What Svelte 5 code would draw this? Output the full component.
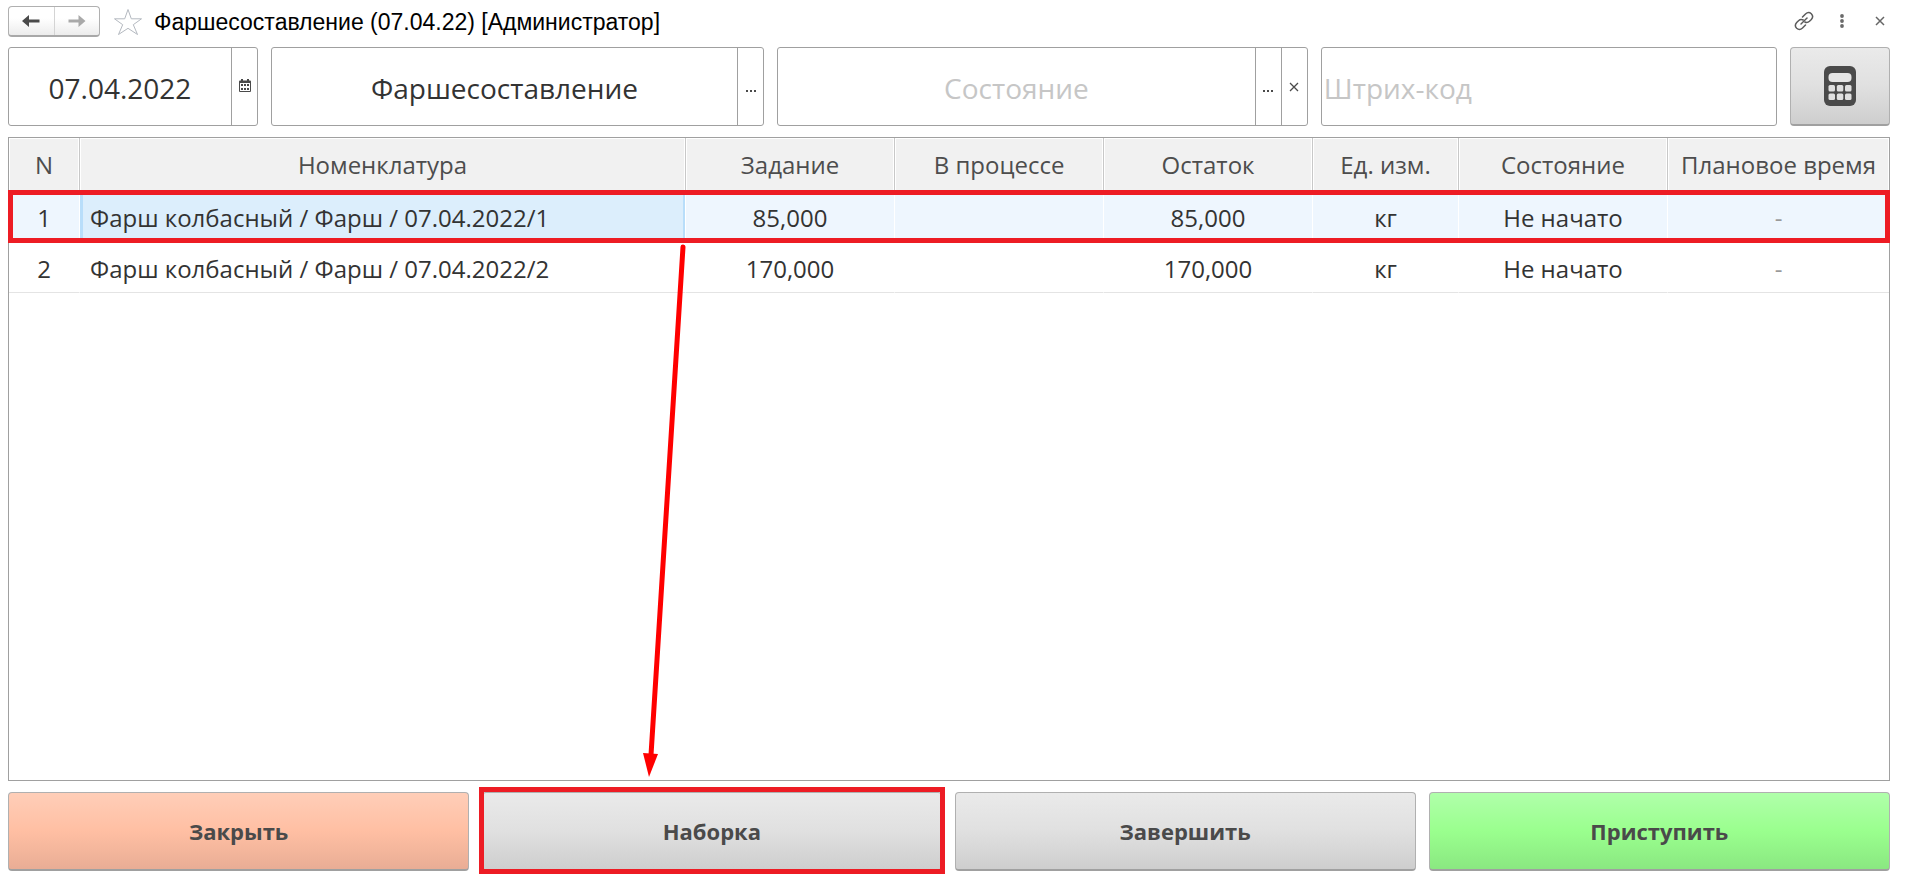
<script>
  let date = $state('07.04.2022');
  let stage = $state('Фаршесоставление');
  let status = $state('');
  let barcode = $state('');

  const columns = [
    { title: 'N', cls: 'c-num' },
    { title: 'Номенклатура', cls: 'c-name' },
    { title: 'Задание', cls: 'c-mid' },
    { title: 'В процессе', cls: 'c-mid' },
    { title: 'Остаток', cls: 'c-mid' },
    { title: 'Ед. изм.', cls: 'c-unit' },
    { title: 'Состояние', cls: 'c-mid' },
    { title: 'Плановое время', cls: 'c-time' }
  ];

  const rows = [
    { n: 1, name: 'Фарш колбасный / Фарш / 07.04.2022/1', task: '85,000', work: '', rest: '85,000', unit: 'кг', state: 'Не начато', time: '-' },
    { n: 2, name: 'Фарш колбасный / Фарш / 07.04.2022/2', task: '170,000', work: '', rest: '170,000', unit: 'кг', state: 'Не начато', time: '-' }
  ];
  let selected = $state(1);
</script>

<div class="page">
  <header>
    <div class="nav">
      <button aria-label="Назад">
        <svg width="18" height="12" viewBox="0 0 18 12"><path d="M0 6 7 0V4.500H17.500V7.500H7V12Z" fill="#4a4a4a" /></svg>
      </button>
      <button aria-label="Вперед">
        <svg width="18" height="12" viewBox="0 0 18 12"><path d="M17.500 6 10.500 0V4.500H.5V7.500H10.500V12Z" fill="#a9a9a9" /></svg>
      </button>
    </div>
    <button class="plain star" aria-label="В избранное">
      <svg width="30" height="28" viewBox="0 0 30 28"><path d="M15 1.500 18.300 10.800H28.500L20.300 16.700 24.500 26.500 15 20.300 5.500 26.500 9.700 16.700 1.500 10.800H11.700Z" fill="none" stroke="#b4b9c0" /></svg>
    </button>
    <h1>Фаршесоставление (07.04.22) [Администратор]</h1>
    <div class="tools">
      <button class="plain" aria-label="Ссылка">
        <svg width="20" height="20" viewBox="0 0 20 20" fill="none" stroke="#5c5c5c" stroke-width="1.500" stroke-linecap="round">
          <path d="M8.500 6 11.500 3Q14.500 .2 17.300 2.700 20 5.500 17.300 8.500L15.500 10.300Q13.300 12.200 10.800 11" />
          <path d="M11.500 14 8.500 17Q5.500 19.800 2.700 17.300 0 14.500 2.700 11.500L4.500 9.700Q6.700 7.800 9.200 9" />
          <path d="M7 13 13 7" />
        </svg>
      </button>
      <button class="plain" aria-label="Меню">
        <svg width="20" height="20" viewBox="0 0 20 20" fill="#6a6a6a"><circle cx="10" cy="5" r="1.900" /><circle cx="10" cy="10" r="1.900" /><circle cx="10" cy="15" r="1.900" /></svg>
      </button>
      <button class="plain" aria-label="Закрыть окно">
        <svg width="20" height="20" viewBox="0 0 20 20" stroke="#666" stroke-width="1.500"><path d="M6 6 14 14M14 6 6 14" /></svg>
      </button>
    </div>
  </header>

  <div class="filters">
    <div class="field date">
      <input aria-label="Дата" bind:value={date} />
      <button aria-label="Выбрать дату">
        <svg width="12" height="16" viewBox="0 0 12 16">
          <path d="M1 1.500H2V0H4V1.500H8V0H10V1.500H11Q12 1.500 12 2.500V12Q12 13 11 13H1Q0 13 0 12V2.500Q0 1.500 1 1.500ZM1 4V12H11V4Z" fill="#4a4a4a" fill-rule="evenodd" />
          <path d="M2 5H4V7H2ZM5 5H7V7H5ZM8 5H10V7H8ZM2 9H4V11H2ZM5 9H7V11H5ZM8 9H10V11H8Z" fill="#4a4a4a" />
        </svg>
      </button>
    </div>
    <div class="field stage">
      <input aria-label="Этап" bind:value={stage} />
      <button aria-label="Выбрать этап"><svg width="10" height="14" viewBox="0 0 10 14"><path d="M0 10H2V12H0ZM4 10H6V12H4ZM8 10H10V12H8Z" fill="#4a4a4a" /></svg></button>
    </div>
    <div class="field status">
      <input aria-label="Состояние" placeholder="Состояние" bind:value={status} />
      <button aria-label="Выбрать состояние"><svg width="10" height="14" viewBox="0 0 10 14"><path d="M0 10H2V12H0ZM4 10H6V12H4ZM8 10H10V12H8Z" fill="#4a4a4a" /></svg></button>
      <button aria-label="Очистить" onclick={() => (status = '')}><svg width="10" height="10" viewBox="0 0 10 10"><path d="M1 1 9 9M9 1 1 9" stroke="#4a4a4a" stroke-width="1.300" /></svg></button>
    </div>
    <div class="field code">
      <input aria-label="Штрих-код" placeholder="Штрих-код" bind:value={barcode} />
    </div>
    <button class="btn calc" aria-label="Калькулятор">
      <svg width="34" height="42" viewBox="0 0 34 42">
        <rect x="1" y="1" width="32" height="40" rx="6" fill="#4a4a4a" />
        <rect x="5.500" y="8" width="23" height="9" rx="4" fill="#e6e6e6" />
        <g fill="#e0e0e0">
          <rect x="5.500" y="20" width="6.500" height="6.500" rx="1.500" /><rect x="13.800" y="20" width="6.500" height="6.500" rx="1.500" /><rect x="22" y="20" width="6.500" height="6.500" rx="1.500" />
          <rect x="5.500" y="28.500" width="6.500" height="6.500" rx="1.500" /><rect x="13.800" y="28.500" width="6.500" height="6.500" rx="1.500" /><rect x="22" y="28.500" width="6.500" height="6.500" rx="1.500" />
        </g>
      </svg>
    </button>
  </div>

  <main>
    <table>
      <thead>
        <tr>
          {#each columns as c}<th class={c.cls}>{c.title}</th>{/each}
        </tr>
      </thead>
      <tbody>
        {#each rows as r}
          <tr class:selected={selected === r.n} onclick={() => (selected = r.n)}>
            <td>{r.n}</td>
            <td class="name">{r.name}</td>
            <td>{r.task}</td>
            <td>{r.work}</td>
            <td>{r.rest}</td>
            <td>{r.unit}</td>
            <td>{r.state}</td>
            <td class="time">{r.time}</td>
          </tr>
        {/each}
      </tbody>
    </table>
    <div class="mark row-mark"></div>
    <svg class="arrow" width="50" height="534" viewBox="0 0 50 534">
      <path d="M40 4 8 512" stroke="#f00" stroke-width="5" stroke-linecap="round" />
      <path d="M0 510 15 511 6 534Z" fill="#f00" />
    </svg>
  </main>

  <footer>
    <button class="btn close">Закрыть</button>
    <div class="slot">
      <button class="btn">Наборка</button>
      <div class="mark button-mark"></div>
    </div>
    <button class="btn">Завершить</button>
    <button class="btn start">Приступить</button>
  </footer>
</div>

<style>
  :global(body) { background: #fff; }
  .page {
    box-sizing: border-box;
    min-height: 100vh;
    padding: 6px 18px 3px 8px;
    display: flex;
    flex-direction: column;
    font-family: "Open Sans", "Noto Sans", sans-serif;
    font-size: 24px;
    color: #333;
  }
  button, input { font: inherit; color: inherit; margin: 0; }
  button { padding: 0; cursor: pointer; display: flex; align-items: center; justify-content: center; }
  svg { display: block; flex: none; }

  header { display: flex; align-items: center; height: 31px; margin-bottom: 10px; }
  .nav {
    box-sizing: border-box;
    display: flex;
    width: 92px;
    height: 31px;
    border: 1px solid #b0b0b0;
    border-bottom: 2px solid #a8a8a8;
    border-radius: 4px;
    background: linear-gradient(#fff 40%, #ececec);
  }
  .nav button { flex: 1; border: 0; background: none; }
  .nav button + button { border-left: 1px solid #d4d4d4; }
  .plain { border: 0; background: none; }
  .star { margin: 0 11px 0 13px; }
  h1 {
    flex: 1;
    margin: 0;
    font: 23px/30px "Liberation Sans", Arial, sans-serif;
    color: #000;
    white-space: nowrap;
  }
  .tools { display: flex; gap: 18px; padding-bottom: 2px; }

  .filters { display: flex; gap: 13px; height: 79px; margin-bottom: 11px; }
  .field {
    box-sizing: border-box;
    display: flex;
    min-width: 0;
    border: 1px solid #a0a0a0;
    border-radius: 3px;
    background: #fff;
    overflow: hidden;
    font-size: 28px;
  }
  .field input {
    flex: 1;
    min-width: 0;
    box-sizing: border-box;
    border: 0;
    outline: 0;
    background: none;
    padding: 2px 2px 0;
    text-align: center;
  }
  .field input::placeholder { color: #c6c6c6; opacity: 1; }
  .field button { width: 26px; border: 0; border-left: 1px solid #a0a0a0; background: none; }
  .date { flex: 0 0 250px; }
  .stage { flex: 493 1 0; }
  .status { flex: 531 1 0; }
  .code { flex: 456 1 0; }
  .code input { text-align: left; }

  .btn {
    box-sizing: border-box;
    border: 1px solid #b0b0b0;
    border-bottom: 2px solid #a0a0a0;
    border-radius: 4px;
    background: linear-gradient(#eaeaea, #e0e0e0 50%, #cecece);
    color: #4a4a4a;
  }
  .calc { flex: 0 0 100px; }

  main { position: relative; flex: 1; border: 1px solid #a0a0a0; }
  table { width: 100%; table-layout: fixed; border-collapse: separate; border-spacing: 0; }
  th, td { box-sizing: border-box; text-align: center; font-weight: 400; white-space: nowrap; }
  th {
    height: 53px;
    padding: 0 0 1px;
    background: #f1f1f1;
    color: #4d4d4d;
    border-right: 1px solid #c8c8c8;
    box-shadow: inset 0 0 0 1px #fff;
  }
  th:last-child { border-right: 0; }
  .c-num { width: 71px; }
  .c-mid { width: 209px; }
  .c-unit { width: 146px; }
  .c-time { width: 221px; }
  td { height: 51px; padding: 3px 0 0; border-bottom: 1px solid #e4e4e4; border-right: 1px solid #fff; }
  td.name { text-align: left; padding-left: 10px; }
  td.time { color: #999; border-right: 0; }
  .selected td { background: #eef6fe; }
  .selected td.name {
    background: #dceefc;
    box-shadow: inset 3px 0 #b9defa, inset -2px 0 #b9defa;
  }

  .mark { position: absolute; border: 5px solid #ed1c24; pointer-events: none; }
  .row-mark { top: 52px; left: -1px; right: -1px; height: 43px; }
  .button-mark { inset: -5px -3px -3px; }
  .arrow { position: absolute; left: 634px; top: 105px; pointer-events: none; }

  footer { display: flex; gap: 13px; height: 79px; margin-top: 11px; }
  footer > * { flex: 1 1 0; }
  footer .btn { font-weight: 700; font-size: 22px; }
  .slot { position: relative; display: flex; }
  .slot .btn { flex: 1; }
  .close { background: linear-gradient(#ffceb8, #ffbfa3 50%, #e9ad95); }
  .start { background: linear-gradient(#b0ffaa, #9aff8e 50%, #8ae881); }
</style>
